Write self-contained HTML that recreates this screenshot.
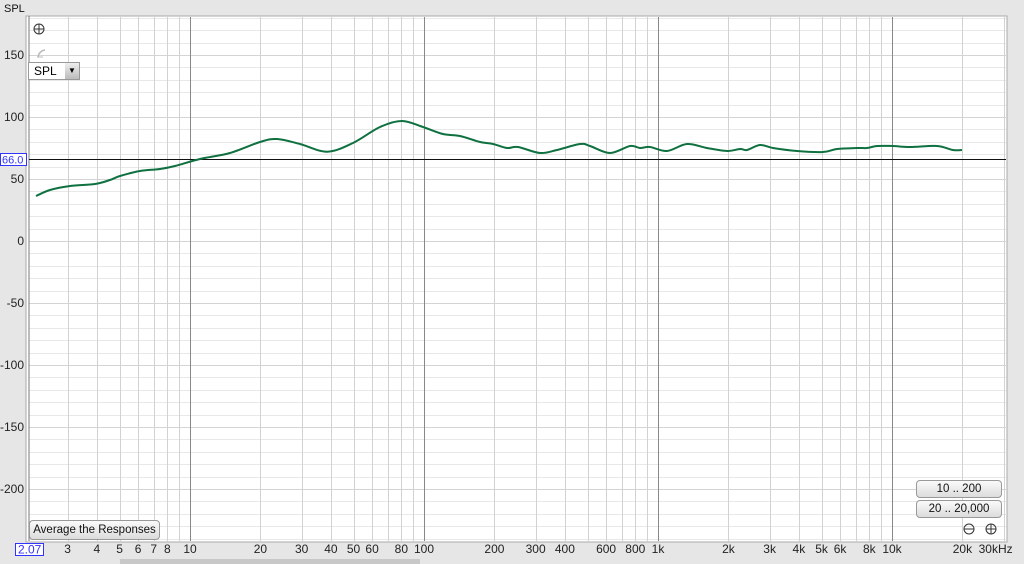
<!DOCTYPE html>
<html><head><meta charset="utf-8"><style>
body{margin:0;width:1024px;height:564px;background:#e6e6e6;overflow:hidden;font-family:"Liberation Sans",sans-serif;position:relative}
.btn{position:absolute;background:linear-gradient(#fafafa,#dcdcdc);border:1px solid #999;border-radius:4px;font-size:11.5px;text-align:center;color:#111;box-sizing:border-box}
</style></head><body>
<svg width="1024" height="564" style="position:absolute;left:0;top:0" font-family="Liberation Sans, sans-serif" font-size="12">
<rect x="26" y="16" width="981" height="526" fill="#fff" stroke="#aaa"/>
<g id="h" stroke="#e2e2e2" stroke-width="1"></g>
<g id="v"></g>
<text x="4" y="12" fill="#111" font-size="11">SPL</text>
<g id="yl" fill="#222" text-anchor="end"></g>
<g id="xl" fill="#222" text-anchor="middle"></g>
<line x1="29" y1="16" x2="29" y2="541" stroke="#777"/>
<line x1="29" y1="159.5" x2="1006" y2="159.5" stroke="#111"/>
<rect x="0.5" y="153.5" width="26" height="12" fill="#fff" stroke="#33f"/>
<text x="2" y="163.5" fill="#33f" font-size="11">66.0</text>
<rect x="15.5" y="543.5" width="28" height="12" fill="#fff" stroke="#33f"/>
<text x="18" y="553.5" fill="#33f">2.07</text>
<path id="c" fill="none" stroke="#0f7040" stroke-width="2" d=""/>
<rect x="120" y="559" width="300" height="5" fill="#c8c8c8"/>
<circle cx="39" cy="29" r="5" fill="none" stroke="#333"/><path d="M34 29h10M39 24v10" stroke="#333"/>
<path d="M38 57a8 8 0 0 1 7-7" fill="none" stroke="#bbb" stroke-width="1.5"/><path d="M37 57h6" stroke="#bbb"/>
<circle cx="969" cy="529" r="5" fill="none" stroke="#333"/><path d="M964 529h10" stroke="#333"/>
<circle cx="991" cy="529" r="5" fill="none" stroke="#333"/><path d="M986 529h10M991 524v10" stroke="#333"/>
</svg>
<div style="position:absolute;left:28px;top:62px;width:52px;height:18px;border:1px solid #999;background:#fff;box-sizing:border-box;font-size:12px;line-height:16px;padding-left:5px">SPL<div style="position:absolute;right:0;top:0;width:14px;height:16px;background:linear-gradient(#eee,#bbb);text-align:center;font-size:8px;line-height:16px">▼</div></div>
<div class="btn" style="left:29px;top:520px;width:131px;height:20px;line-height:18px">Average the Responses</div>
<div class="btn" style="left:916px;top:480px;width:86px;height:18px;line-height:16px">10 .. 200</div>
<div class="btn" style="left:916px;top:500px;width:86px;height:18px;line-height:16px">20 .. 20,000</div>
<script>
var ns="http://www.w3.org/2000/svg";
function el(p,t,a,txt){var e=document.createElementNS(ns,t);for(var k in a)e.setAttribute(k,a[k]);if(txt)e.textContent=txt;document.getElementById(p).appendChild(e);}
function X(f){return 190+234*(Math.log10(f)-1);}
function Y(v){return 241-1.24*v;}
for(var v=180;v>=-240;v-=10){var y=Math.round(Y(v))+.5;el("h","line",{x1:29,x2:1006,y1:y,y2:y,stroke:v%50==0?"#d4d4d4":"#e8e8e8"});}
for(var v=150;v>=-200;v-=50){el("yl","text",{x:24,y:Y(v)+4},String(v));}
for(var d=1;d<=10000;d*=10){for(var m=1;m<10;m++){var f=d*m;if(f<2.1||f>30000)continue;var x=Math.round(X(f))+.5;el("v","line",{x1:x,x2:x,y1:17,y2:541,stroke:m==1?"#888":"#d2d2d2"});}}
var L=[[3,"3"],[4,"4"],[5,"5"],[6,"6"],[7,"7"],[8,"8"],[10,"10"],[20,"20"],[30,"30"],[40,"40"],[50,"50"],[60,"60"],[80,"80"],[100,"100"],[200,"200"],[300,"300"],[400,"400"],[600,"600"],[800,"800"],[1000,"1k"],[2000,"2k"],[3000,"3k"],[4000,"4k"],[5000,"5k"],[6000,"6k"],[8000,"8k"],[10000,"10k"],[20000,"20k"],[30000,"30kHz"]];
L.forEach(function(l){var x=X(l[0]);if(l[1]=="30kHz")x-=8;el("xl","text",{x:x,y:553},l[1]);});
var P=[[36,196],[50,190],[70,186],[95,184],[110,180],[120,176],[140,171],[160,169],[175,166],[200,159],[230,153],[260,142],[277,139],[300,144],[327,151.7],[353,143],[380,127],[402,121],[423,127],[443,134],[460,136],[480,142],[493,144],[507,148],[518,147],[540,153],[557,150],[580,144],[590,146],[610,153],[630,146],[640,148],[650,147],[667,151],[687,144],[707,148],[727,151],[740,149],[747,150],[760,145],[773,148],[797,151],[823,152],[837,149],[857,148],[867,148],[877,146],[893,146],[910,147],[937,146],[953,150],[962,150]];
var d="M"+P[0][0]+" "+P[0][1];
for(var i=0;i<P.length-1;i++){var p0=P[Math.max(i-1,0)],p1=P[i],p2=P[i+1],p3=P[Math.min(i+2,P.length-1)];
d+=" C"+(p1[0]+(p2[0]-p0[0])/6)+" "+(p1[1]+(p2[1]-p0[1])/6)+" "+(p2[0]-(p3[0]-p1[0])/6)+" "+(p2[1]-(p3[1]-p1[1])/6)+" "+p2[0]+" "+p2[1];}
document.getElementById("c").setAttribute("d",d);
</script>
</body></html>
